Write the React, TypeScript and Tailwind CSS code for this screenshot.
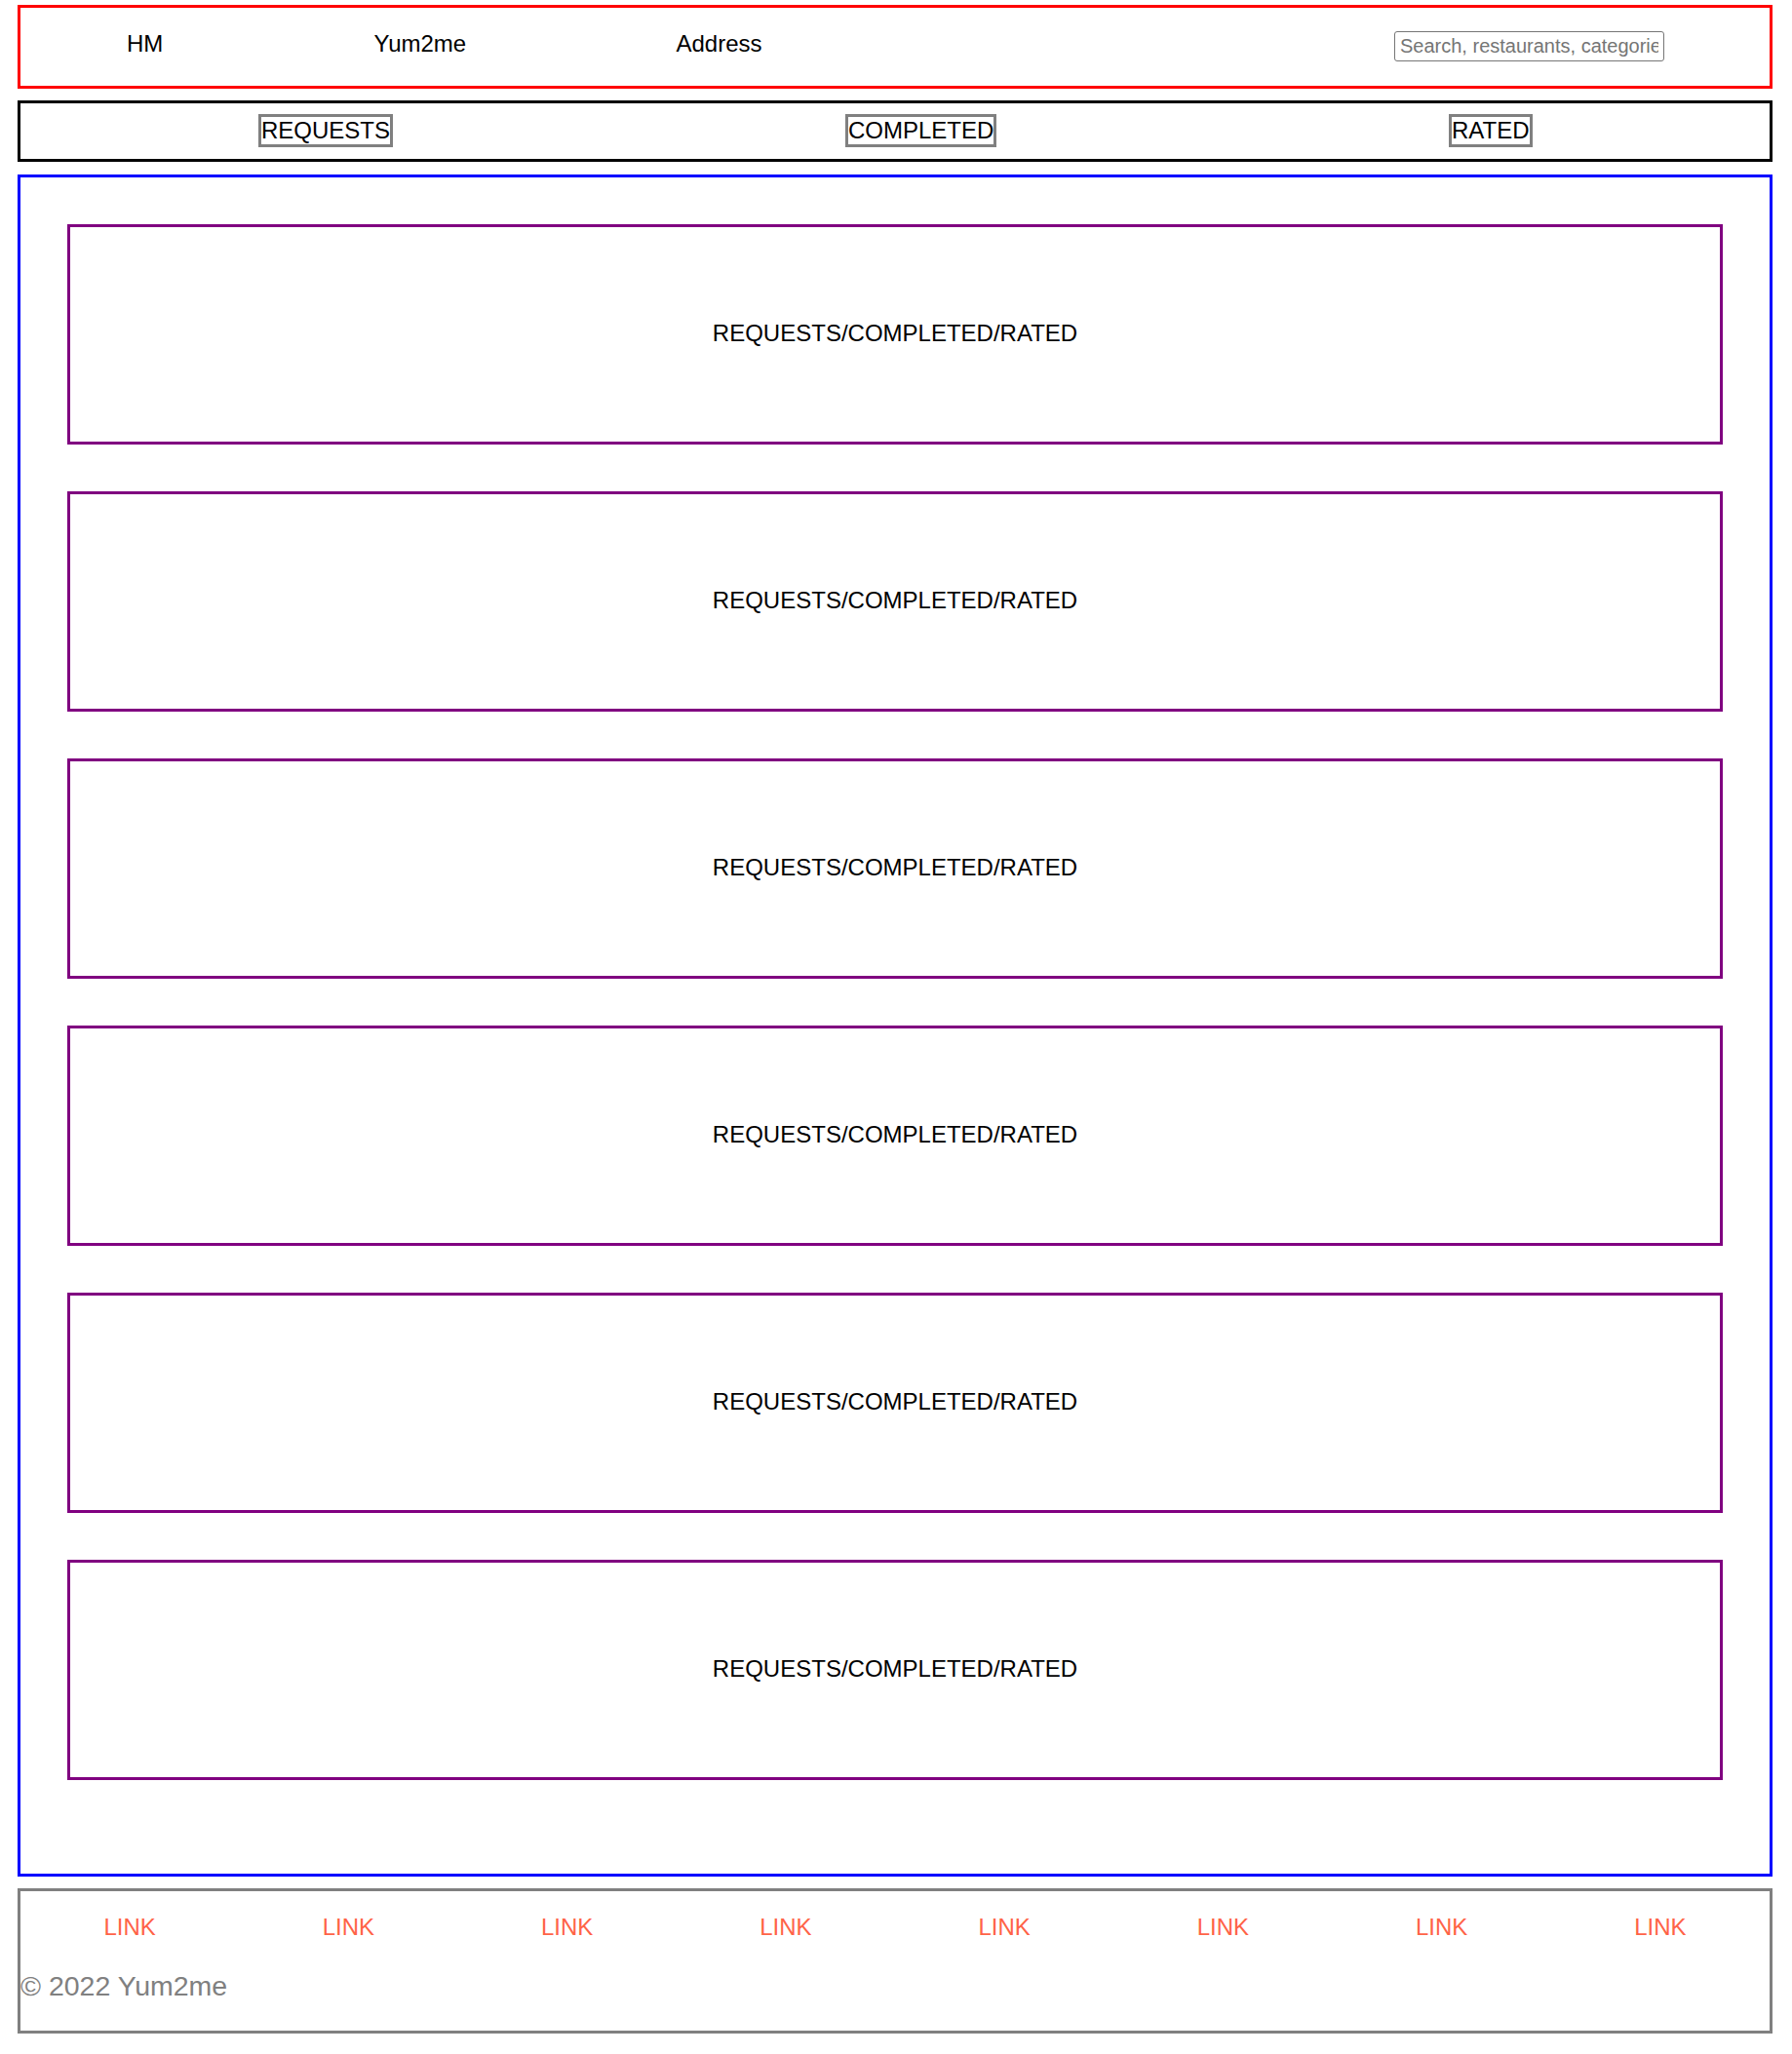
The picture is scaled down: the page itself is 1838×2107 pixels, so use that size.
import React from "react";

const font = { fontFamily: '"Liberation Sans", Arial, sans-serif' };

function Card() {
  return (
    <div className="box-border h-[226px] w-full border-[3px] border-[#800080] mb-[48px] flex items-center justify-center pb-[2px] text-[24px] leading-[28px] text-black">
      REQUESTS/COMPLETED/RATED
    </div>
  );
}

export default function App() {
  const links = Array.from({ length: 8 });
  return (
    <div className="bg-white min-h-[2107px] pt-[5px] pl-[18px]" style={font}>
      <div className="w-[1800px] flex flex-col">
        {/* Header */}
        <header className="box-border h-[86px] border-[3px] border-[#ff0000] flex items-start pt-[21px] pr-[108px] text-[24px] leading-[28px] text-black">
          <div className="w-[362.5px] pl-[109px] pt-[2px]">HM</div>
          <div className="w-[310px] pt-[2px]">Yum2me</div>
          <div className="pt-[2px]">Address</div>
          <input
            type="text"
            placeholder="Search, restaurants, categories"
            className="ml-auto mt-[3px] box-border w-[277px] h-[31px] border border-[#767676] rounded-[3px] px-[5px] text-[20px] text-black placeholder:text-[#757575] outline-none bg-white"
            style={font}
          />
        </header>

        {/* Tabs */}
        <nav className="box-border mt-[12px] h-[63px] border-[3px] border-black flex items-center pb-[2px] text-[24px] leading-[28px]">
          <div className="w-[846px] pl-[244px]">
            <button className="box-border border-[3px] border-[#808080] px-0 leading-[28px] text-black bg-white" style={font}>
              REQUESTS
            </button>
          </div>
          <div className="w-[619px]">
            <button className="box-border border-[3px] border-[#808080] px-0 leading-[28px] text-black bg-white" style={font}>
              COMPLETED
            </button>
          </div>
          <div>
            <button className="box-border border-[3px] border-[#808080] px-0 leading-[28px] text-black bg-white" style={font}>
              RATED
            </button>
          </div>
        </nav>

        {/* Main list */}
        <main className="box-border mt-[13px] border-[3px] border-[#0000ff] px-[48px] pt-[48px] pb-[48px] flex flex-col">
          <Card />
          <Card />
          <Card />
          <Card />
          <Card />
          <Card />
        </main>

        {/* Footer */}
        <footer className="box-border mt-[12px] h-[149px] border-[3px] border-[#808080] pt-[23px]">
          <div className="flex">
            {links.map((_, i) => (
              <a
                key={i}
                href="#"
                className="flex-1 text-center text-[24px] leading-[28px] text-[#ff6347] no-underline"
              >
                LINK
              </a>
            ))}
          </div>
          <p className="mt-[30px] text-[28.5px] leading-[33px] text-[#808080]">© 2022 Yum2me</p>
        </footer>
      </div>
    </div>
  );
}
